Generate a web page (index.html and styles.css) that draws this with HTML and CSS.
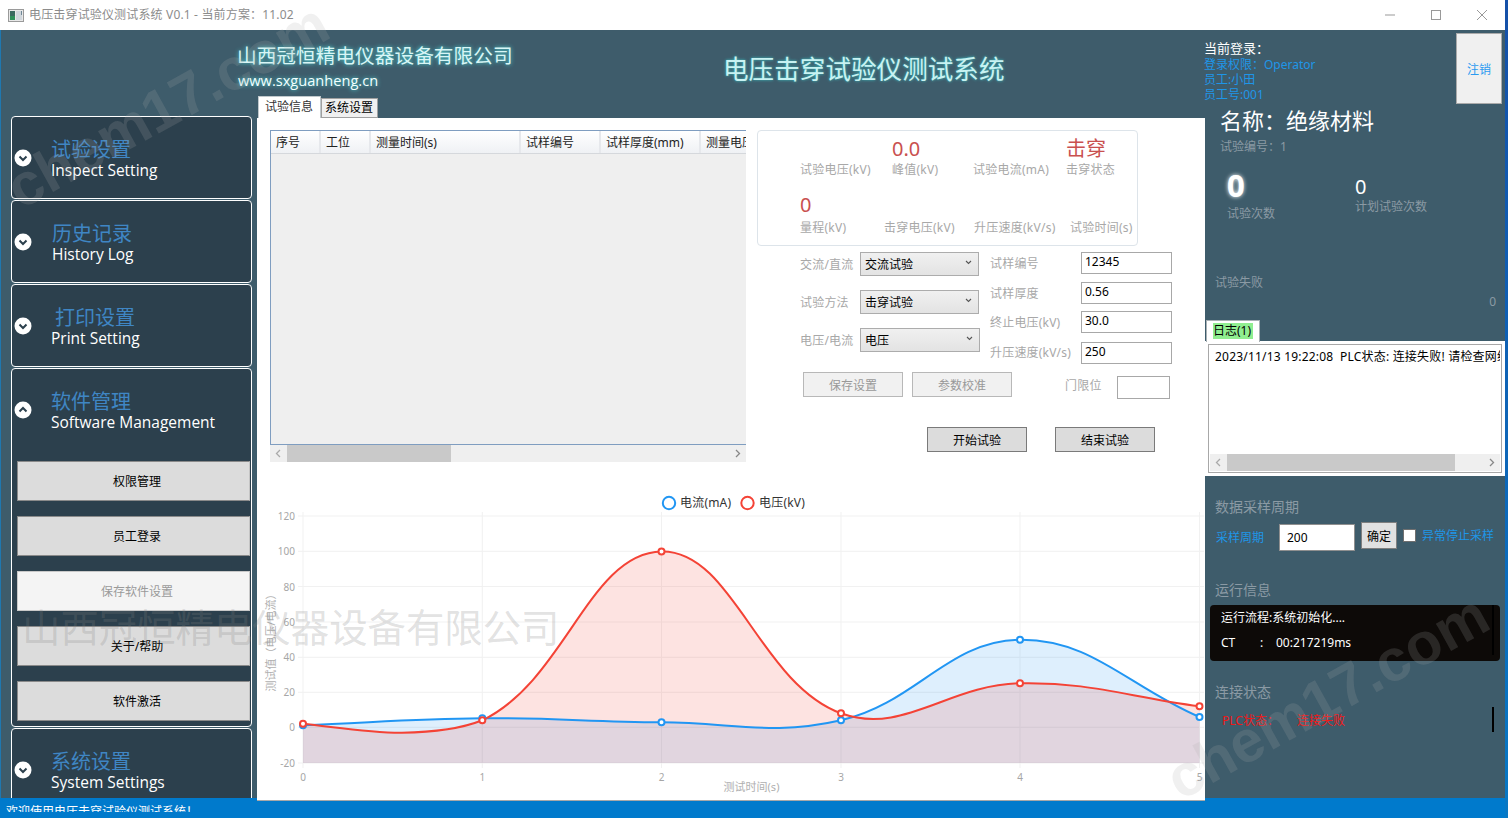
FILE: index.html
```html
<!DOCTYPE html>
<html lang="zh-CN">
<head>
<meta charset="utf-8">
<title>电压击穿试验仪测试系统</title>
<link rel="stylesheet" href="styles.css">
</head>
<body>
<div class="window">
  <header class="titlebar">
    <svg class="app-icon" width="16" height="13" viewBox="0 0 16 13"><rect x="0.5" y="0.5" width="15" height="12" fill="#e8e8e8" stroke="#9a9a9a"/><rect x="2" y="2" width="5" height="9" fill="#3a6a60"/><rect x="2" y="7" width="5" height="4" fill="#2f8f5a"/><rect x="8" y="2" width="6" height="9" fill="#cfd6dc"/><rect x="13" y="2" width="1" height="4" fill="#6f8796"/></svg>
    <span class="app-title">电压击穿试验仪测试系统 V0.1 - 当前方案：11.02</span>
    <div class="win-controls">
      <svg width="12" height="12" viewBox="0 0 12 12"><path d="M1 6H11" stroke="#999" fill="none"/></svg>
      <svg width="12" height="12" viewBox="0 0 12 12"><rect x="1.5" y="1.5" width="9" height="9" stroke="#999" fill="none"/></svg>
      <svg width="12" height="12" viewBox="0 0 12 12"><path d="M1 1L11 11M11 1L1 11" stroke="#999" fill="none"/></svg>
    </div>
  </header>

  <div class="main">
    <aside class="sidebar">
      <section class="card">
        <div class="card-head">
          <svg class="chev" width="18" height="18" viewBox="0 0 18 18"><circle cx="9" cy="9" r="8.5" fill="#fff"/><path d="M5.5 7.5L9 11L12.5 7.5" fill="none" stroke="#2c404d" stroke-width="2"/></svg>
          <div class="card-text"><div class="card-cn">试验设置</div><div class="card-en">Inspect Setting</div></div>
        </div>
      </section>
      <section class="card">
        <div class="card-head">
          <svg class="chev" width="18" height="18" viewBox="0 0 18 18"><circle cx="9" cy="9" r="8.5" fill="#fff"/><path d="M5.5 7.5L9 11L12.5 7.5" fill="none" stroke="#2c404d" stroke-width="2"/></svg>
          <div class="card-text shift-1"><div class="card-cn">历史记录</div><div class="card-en">History Log</div></div>
        </div>
      </section>
      <section class="card">
        <div class="card-head">
          <svg class="chev" width="18" height="18" viewBox="0 0 18 18"><circle cx="9" cy="9" r="8.5" fill="#fff"/><path d="M5.5 7.5L9 11L12.5 7.5" fill="none" stroke="#2c404d" stroke-width="2"/></svg>
          <div class="card-text"><div class="card-cn shift-4">打印设置</div><div class="card-en">Print Setting</div></div>
        </div>
      </section>
      <section class="card card-open">
        <div class="card-head">
          <svg class="chev" width="18" height="18" viewBox="0 0 18 18"><circle cx="9" cy="9" r="8.5" fill="#fff"/><path d="M5.5 10.5L9 7L12.5 10.5" fill="none" stroke="#2c404d" stroke-width="2"/></svg>
          <div class="card-text"><div class="card-cn">软件管理</div><div class="card-en">Software Management</div></div>
        </div>
        <div class="menu">
          <div class="menu-btn">权限管理</div>
          <div class="menu-btn">员工登录</div>
          <div class="menu-btn is-disabled">保存软件设置</div>
          <div class="menu-btn">关于/帮助</div>
          <div class="menu-btn">软件激活</div>
        </div>
      </section>
      <section class="card">
        <div class="card-head">
          <svg class="chev" width="18" height="18" viewBox="0 0 18 18"><circle cx="9" cy="9" r="8.5" fill="#fff"/><path d="M5.5 7.5L9 11L12.5 7.5" fill="none" stroke="#2c404d" stroke-width="2"/></svg>
          <div class="card-text"><div class="card-cn">系统设置</div><div class="card-en">System Settings</div></div>
        </div>
      </section>
    </aside>

    <div class="center">
      <div class="brand">
        <div class="company">
          <div class="company-name">山西冠恒精电仪器设备有限公司</div>
          <div class="company-url">www.sxguanheng.cn</div>
        </div>
        <h1 class="sys-title">电压击穿试验仪测试系统</h1>
      </div>
      <div class="tabs">
        <div class="tab tab-active">试验信息</div>
        <div class="tab">系统设置</div>
      </div>
      <div class="panel">
        <div class="panel-top">
          <div class="table-col">
            <div class="table">
              <div class="thead">
                <div class="th th-a">序号</div>
                <div class="th th-b">工位</div>
                <div class="th th-c">测量时间(s)</div>
                <div class="th th-d">试样编号</div>
                <div class="th th-e">试样厚度(mm)</div>
                <div class="th th-f">测量电压(kV)</div>
              </div>
            </div>
            <div class="hscroll">
              <svg width="17" height="17" viewBox="0 0 17 17"><path d="M10 5L6.5 8.5L10 12" fill="none" stroke="#aaa" stroke-width="1.3"/></svg>
              <div class="hthumb table-thumb"></div>
              <svg class="hscroll-end" width="17" height="17" viewBox="0 0 17 17"><path d="M7 5L10.5 8.5L7 12" fill="none" stroke="#888" stroke-width="1.3"/></svg>
            </div>
          </div>

          <div class="side-col">
            <div class="stats">
              <div class="stat-row">
                <div class="stat s92"><div class="stat-val"></div><div class="stat-lab">试验电压(kV)</div></div>
                <div class="stat s81"><div class="stat-val">0.0</div><div class="stat-lab">峰值(kV)</div></div>
                <div class="stat s93"><div class="stat-val"></div><div class="stat-lab">试验电流(mA)</div></div>
                <div class="stat"><div class="stat-val">击穿</div><div class="stat-lab">击穿状态</div></div>
              </div>
              <div class="stat-row row-two">
                <div class="stat s84"><div class="stat-val">0</div><div class="stat-lab">量程(kV)</div></div>
                <div class="stat s90"><div class="stat-val"></div><div class="stat-lab">击穿电压(kV)</div></div>
                <div class="stat s96"><div class="stat-val"></div><div class="stat-lab">升压速度(kV/s)</div></div>
                <div class="stat"><div class="stat-val"></div><div class="stat-lab">试验时间(s)</div></div>
              </div>
            </div>

            <div class="form">
              <div class="form-left">
                <div class="fld"><span class="fld-lab fl60">交流/直流</span><div class="sel"><span class="sel-text">交流试验</span><svg width="7" height="5" viewBox="0 0 7 5"><path d="M1 1L3.5 3.5L6 1" fill="none" stroke="#555" stroke-width="1.1"/></svg></div></div>
                <div class="fld"><span class="fld-lab fl60">试验方法</span><div class="sel"><span class="sel-text">击穿试验</span><svg width="7" height="5" viewBox="0 0 7 5"><path d="M1 1L3.5 3.5L6 1" fill="none" stroke="#555" stroke-width="1.1"/></svg></div></div>
                <div class="fld"><span class="fld-lab fl60">电压/电流</span><div class="sel sel-wide"><span class="sel-text">电压</span><svg width="7" height="5" viewBox="0 0 7 5"><path d="M1 1L3.5 3.5L6 1" fill="none" stroke="#555" stroke-width="1.1"/></svg></div></div>
              </div>
              <div class="form-right">
                <div class="fld-r"><span class="fld-lab fl91">试样编号</span><input class="txt" value="12345"></div>
                <div class="fld-r"><span class="fld-lab fl91">试样厚度</span><input class="txt" value="0.56"></div>
                <div class="fld-r"><span class="fld-lab fl91">终止电压(kV)</span><input class="txt" value="30.0"></div>
                <div class="fld-r"><span class="fld-lab fl91">升压速度(kV/s)</span><input class="txt" value="250"></div>
              </div>
            </div>

            <div class="actions">
              <div class="btn btn-light">保存设置</div>
              <div class="btn btn-light">参数校准</div>
              <span class="fld-lab limit-lab">门限位</span>
              <input class="txt limit-input" value="">
            </div>
            <div class="actions-run">
              <div class="btn btn-dark">开始试验</div>
              <div class="btn btn-dark">结束试验</div>
            </div>
          </div>
        </div>

        <svg class="chart" width="948" height="311" viewBox="257 490 948 311">
          <g class="grid">
            <line x1="298" x2="1204" y1="516" y2="516"/><line x1="298" x2="1204" y1="551.3" y2="551.3"/>
            <line x1="298" x2="1204" y1="586.5" y2="586.5"/><line x1="298" x2="1204" y1="622" y2="622"/>
            <line x1="298" x2="1204" y1="657.3" y2="657.3"/><line x1="298" x2="1204" y1="692.3" y2="692.3"/>
            <line x1="298" x2="1204" y1="727.3" y2="727.3"/><line x1="298" x2="1204" y1="763" y2="763"/>
            <line x1="303" x2="303" y1="512" y2="768"/><line x1="482.3" x2="482.3" y1="512" y2="768"/>
            <line x1="661.5" x2="661.5" y1="512" y2="768"/><line x1="841" x2="841" y1="512" y2="768"/>
            <line x1="1020" x2="1020" y1="512" y2="768"/><line x1="1199.5" x2="1199.5" y1="512" y2="768"/>
          </g>
          <path class="fill-blue" d="M303,725.3 C374.7,722.5 410.6,718.9 482.3,718.3 C554,717.7 589.8,721.9 661.5,722.3 C733.2,722.7 772.5,736.1 841,720.3 C915.9,703 948.3,640.4 1020,639.7 C1091.7,639 1127.7,686.1 1199.5,717 L1199.5,763 L303,763 Z"/>
          <path class="fill-red" d="M303,723.7 C335,727 370,733 402,732.7 C430,732.4 458,730 482.3,720.3 C565.3,680.5 589.1,552.9 661.5,551.5 C732.6,550.1 759.1,683.2 841,713.3 C902.5,735.9 948.3,684.7 1020,683.3 C1091.7,681.9 1127.7,697.1 1199.5,706.3 L1199.5,763 L303,763 Z"/>
          <path class="line-blue" d="M303,725.3 C374.7,722.5 410.6,718.9 482.3,718.3 C554,717.7 589.8,721.9 661.5,722.3 C733.2,722.7 772.5,736.1 841,720.3 C915.9,703 948.3,640.4 1020,639.7 C1091.7,639 1127.7,686.1 1199.5,717"/>
          <path class="line-red" d="M303,723.7 C335,727 370,733 402,732.7 C430,732.4 458,730 482.3,720.3 C565.3,680.5 589.1,552.9 661.5,551.5 C732.6,550.1 759.1,683.2 841,713.3 C902.5,735.9 948.3,684.7 1020,683.3 C1091.7,681.9 1127.7,697.1 1199.5,706.3"/>
          <g class="pt-blue">
            <circle cx="303" cy="725.3" r="3"/><circle cx="482.3" cy="718.3" r="3"/><circle cx="661.5" cy="722.3" r="3"/>
            <circle cx="841" cy="720.3" r="3"/><circle cx="1020" cy="639.7" r="3"/><circle cx="1199.5" cy="717" r="3"/>
          </g>
          <g class="pt-red">
            <circle cx="303" cy="723.7" r="3"/><circle cx="482.3" cy="720.3" r="3"/><circle cx="661.5" cy="551.5" r="3"/>
            <circle cx="841" cy="713.3" r="3"/><circle cx="1020" cy="683.3" r="3"/><circle cx="1199.5" cy="706.3" r="3"/>
          </g>
          <g class="ticks-y">
            <text x="295" y="520">120</text><text x="295" y="555">100</text><text x="295" y="591">80</text>
            <text x="295" y="626">60</text><text x="295" y="661">40</text><text x="295" y="696">20</text>
            <text x="295" y="731">0</text><text x="295" y="767">-20</text>
          </g>
          <g class="ticks-x">
            <text x="303" y="781">0</text><text x="482.3" y="781">1</text><text x="661.5" y="781">2</text>
            <text x="841" y="781">3</text><text x="1020" y="781">4</text><text x="1199.5" y="781">5</text>
          </g>
          <text class="axis-title" x="751.5" y="791">测试时间(s)</text>
          <text class="axis-title" transform="translate(275 640) rotate(-90)">测试值（电压/电流）</text>
          <circle class="leg-blue" cx="669" cy="503" r="6.2"/>
          <text class="leg-text" x="680" y="507">电流(mA)</text>
          <circle class="leg-red" cx="747.5" cy="503" r="6.2"/>
          <text class="leg-text" x="759" y="507">电压(kV)</text>
        </svg>
      </div>
    </div>

    <aside class="right">
      <div class="login">
        <div class="login-info">
          <div class="login-who">当前登录：</div>
          <div class="blue-line">登录权限：Operator</div>
          <div class="blue-line">员工:小田</div>
          <div class="blue-line">员工号:001</div>
        </div>
        <div class="logout">注销</div>
      </div>
      <div class="mat-name">名称：绝缘材料</div>
      <div class="gray-line mat-no">试验编号：1</div>
      <div class="counters">
        <div class="counter"><div class="count-big">0</div><div class="gray-line count-lab">试验次数</div></div>
        <div class="counter counter-b"><div class="count-small">0</div><div class="gray-line">计划试验次数</div></div>
      </div>
      <div class="gray-line fail-lab">试验失败</div>
      <div class="gray-line fail-val">0</div>
      <div class="log-tabs"><div class="log-tab"><span>日志(1)</span></div></div>
      <div class="log">
        <div class="log-inner">
          <div class="log-text">2023/11/13 19:22:08&nbsp; PLC状态: 连接失败! 请检查网络连接是否正常</div>
          <div class="hscroll log-scroll">
            <svg width="17" height="17" viewBox="0 0 17 17"><path d="M10 5L6.5 8.5L10 12" fill="none" stroke="#aaa" stroke-width="1.3"/></svg>
            <div class="hthumb log-thumb"></div>
            <svg class="hscroll-end" width="17" height="17" viewBox="0 0 17 17"><path d="M7 5L10.5 8.5L7 12" fill="none" stroke="#888" stroke-width="1.3"/></svg>
          </div>
        </div>
      </div>
      <div class="sec-title sec-sample">数据采样周期</div>
      <div class="sample">
        <span class="blue-line sample-lab">采样周期</span>
        <input class="sample-input" value="200">
        <div class="sample-ok">确定</div>
        <span class="check"></span>
        <span class="blue-line check-lab">异常停止采样</span>
      </div>
      <div class="sec-title sec-run">运行信息</div>
      <div class="run-box">
        <div class="run-line">运行流程:系统初始化....</div>
        <div class="run-line run-ct"><span class="ct-a">CT</span><span class="ct-b">:</span><span>00:217219ms</span></div>
        <i class="run-bar"></i>
      </div>
      <div class="sec-title sec-conn">连接状态</div>
      <div class="conn">
        <span class="conn-a">PLC状态：</span><span class="conn-b">连接失败</span>
        <i class="conn-bar"></i>
      </div>
    </aside>
  </div>

  <footer class="status"><div class="status-text">欢迎使用电压击穿试验仪测试系统！</div></footer>

  <div class="wm wm-top">chem17.com</div>
  <div class="wm wm-bottom">chem17.com</div>
  <div class="wm-company">山西冠恒精电仪器设备有限公司</div>
</div>
</body>
</html>
```

FILE: styles.css
```css
* { box-sizing: border-box; }
html, body { margin: 0; padding: 0; height: 100%; overflow: hidden; }
body {
  font-family: "Noto Sans", "Noto Sans CJK SC", sans-serif;
  font-size: 12px;
  background: linear-gradient(#1550a8, #0878c4);
}
h1 { margin: 0; font-weight: 400; }

.window {
  position: relative;
  width: 1505px;
  height: 818px;
  display: flex;
  flex-direction: column;
  overflow: hidden;
  background: #1f78b0;
  padding-left: 1px;
}
.titlebar {
  height: 30px;
  background: #fff;
  display: flex;
  align-items: center;
  padding-left: 8px;
  flex: none;
  margin-left: -1px;
}
.app-icon { flex: none; margin-right: 5px; }
.app-title { color: #8c8c8c; line-height: 30px; letter-spacing: .16px; }
.win-controls { margin-left: auto; display: flex; gap: 34px; padding-right: 17px; }
.win-controls svg { display: block; }

.main {
  flex: 1;
  min-height: 0;
  display: flex;
  background: #3e5c6b;
}

/* sidebar */
.sidebar {
  width: 256px;
  flex: none;
  padding: 86px 5px 0 10px;
  overflow: hidden;
}
.card {
  height: 83px;
  margin-bottom: 1px;
  background: #2c404d;
  border: 1px solid #fff;
  border-radius: 4px;
}
.card-open { height: 359px; }
.card-head { height: 82px; display: flex; align-items: center; padding-left: 2px; }
.chev { display: block; flex: none; }
.card-text { margin-left: 19px; }
.shift-1 { margin-left: 20px; }
.shift-4 { margin-left: 4px; }
.card-cn { color: #3f86c4; font-size: 20px; line-height: 26px; }
.card-en { color: #fff; font-size: 15.5px; line-height: 18px; margin-top: -2px; font-family: "Open Sans", "Noto Sans", sans-serif; }
.menu { padding: 10px 0 0 5px; display: flex; flex-direction: column; gap: 15px; }
.menu-btn {
  width: 233px;
  height: 40px;
  background: #dcdcdc;
  border: 1px solid #8a8a8a;
  border-right-color: #c4c4c4;
  color: #000;
  display: flex;
  align-items: center;
  justify-content: center;
  padding-left: 7px;
}
.menu-btn.is-disabled { background: #f4f4f4; color: #9a9a9a; border-color: #c8c8c8; }

/* centre */
.center { width: 948px; flex: none; display: flex; flex-direction: column; position: relative; z-index: 1; height: 771px; }
.brand { height: 66px; display: flex; flex: none; }
.company { width: 290px; margin-left: -20px; padding-top: 15px; flex: none; }
.company-name { color: #d8f6f6; font-size: 19.7px; line-height: 22px; text-shadow: 0 0 4px #4fe3e3; white-space: nowrap; }
.company-url { color: #f2ffff; font-size: 14.6px; line-height: 20px; margin-top: 3px; text-shadow: 0 0 4px #4fe3e3; font-family: "Open Sans", "Noto Sans", sans-serif; margin-left: 1px; }
.sys-title { margin: 25px 0 0 196px; color: #c8f2f2; font-size: 25.6px; line-height: 30px; white-space: nowrap; text-shadow: 0 0 3px #39c9c9; }

.tabs { height: 22px; display: flex; align-items: flex-end; padding-left: 1px; flex: none; }
.tab {
  height: 20px;
  width: 57px;
  background: #f0f0f0;
  border: 1px solid #a0a0a0;
  color: #000;
  line-height: 18px;
  padding-left: 3px;
  margin-bottom: 0;
}
.tab-active { height: 22px; width: 63px; background: #fff; border-color: #c0c8cc; border-bottom: 0; padding-left: 6px; color: #333; line-height: 20px; }

.panel {
  flex: 1;
  background: #fff;
  border-bottom: 1px solid #a8a8a8;
  display: flex;
  flex-direction: column;
  min-height: 0;
}
.panel-top { height: 372px; flex: none; display: flex; padding: 12px 0 0 13px; }
.table-col { width: 476px; flex: none; }
.table { height: 315px; background: #efefef; border: 1px solid #7f9dc0; border-right: 0; overflow: hidden; }
.thead { display: flex; height: 23px; width: 600px; border-bottom: 1px solid #d5d8dc; background: linear-gradient(#fff, #eff1f4); }
.th { border-right: 2px solid #e6e8ec; padding-left: 5px; line-height: 23px; color: #222; white-space: nowrap; }
.th-a { width: 50px; } .th-b { width: 50px; } .th-c { width: 150px; } .th-d { width: 80px; } .th-e { width: 100px; } .th-f { width: 100px; }
.hscroll { display: flex; height: 17px; background: #efefef; width: 476px; }
.hscroll svg { display: block; flex: none; }
.hthumb { height: 17px; background: #c9c9c9; }
.hscroll-end { margin-left: auto; }
.table-thumb { width: 164px; }

.side-col { width: 450px; padding-left: 11px; flex: none; }
.stats { width: 381px; height: 116px; border: 1px solid #dde4ea; border-radius: 4px; padding-left: 42px; }
.stat-row { display: flex; height: 49px; padding-top: 6px; }
.row-two { padding-top: 8px; height: 58px; margin-top: 5px; }
.row-two .stat-lab { margin-top: 3px; }
.stat { flex: none; }
.s92 { width: 92px; } .s81 { width: 81px; } .s93 { width: 93px; } .s84 { width: 84px; } .s90 { width: 90px; } .s96 { width: 96px; }
.stat-val { height: 24px; line-height: 24px; font-size: 20px; color: #c9504f; }
.stat-lab { color: #a8a8a8; line-height: 16px; margin-top: 1px; white-space: nowrap; letter-spacing: .25px; }

.form { display: flex; padding: 6px 0 0 43px; height: 126px; }
.form-left { width: 190px; flex: none; display: flex; flex-direction: column; gap: 14px; }
.fld { display: flex; align-items: center; height: 24px; }
.fld-lab { color: #a8a8a8; white-space: nowrap; letter-spacing: .2px; }
.fl60 { width: 60px; flex: none; }
.fl91 { width: 91px; flex: none; }
.sel {
  width: 119px;
  height: 24px;
  border: 1px solid #acacac;
  background: linear-gradient(#f0f0f0, #e3e3e3);
  color: #000;
  padding-left: 4px;
  display: flex;
  align-items: center;
  justify-content: space-between;
  padding-right: 6px;
}
.sel-text { line-height: 22px; padding-top: 1px; }
.sel svg { margin-top: -3px; display: block; }
.sel-wide { width: 120px; }
.form-right { display: flex; flex-direction: column; gap: 8px; }
.fld-r { display: flex; align-items: center; height: 22px; }
.fld-r:nth-child(3) { margin-top: -1px; }
.fld-r:nth-child(4) { margin-top: 1px; }
.fld-r:nth-child(4) .fld-lab { margin-bottom: 2px; }
.txt {
  width: 91px;
  height: 22px;
  border: 1px solid #a8a8a8;
  background: #fff;
  font: inherit;
  color: #000;
  padding: 0 3px 4px;
  margin: 0;
  outline: 0;
}

.actions { display: flex; align-items: center; padding-left: 46px; height: 25px; margin-top: 0; }
.btn { width: 100px; height: 25px; display: flex; align-items: center; justify-content: center; flex: none; }
.btn-light { background: #f1f1f1; border: 1px solid #b8b8b8; color: #999; }
.btn-light + .btn-light { margin-left: 9px; }
.limit-lab { margin-left: 53px; width: 52px; flex: none; }
.limit-input { width: 53px; height: 23px; margin-top: 5px; }
.actions-run { display: flex; padding-left: 170px; margin-top: 30px; gap: 28px; }
.btn-dark { background: #dcdcdc; border: 1px solid #7a7a7a; color: #000; }

.chart { display: block; flex: none; overflow: hidden; }
.chart text { font-family: "Noto Sans", "Noto Sans CJK SC", sans-serif; }
.grid line { stroke: #f1f1f1; stroke-width: 1; }
.fill-blue { fill: rgba(33, 150, 243, .15); }
.fill-red { fill: rgba(244, 67, 54, .15); }
.line-blue { fill: none; stroke: #2196f3; stroke-width: 2; }
.line-red { fill: none; stroke: #f44336; stroke-width: 2; }
.pt-blue circle { fill: #fff; stroke: #2196f3; stroke-width: 2; }
.pt-red circle { fill: #fff; stroke: #f44336; stroke-width: 2; }
.ticks-y text { font-size: 10px; fill: #a6a6a6; text-anchor: end; }
.ticks-x text { font-size: 10px; fill: #a6a6a6; text-anchor: middle; }
.axis-title { font-size: 11px; fill: #b0b0b0; text-anchor: middle; }
.leg-blue { fill: #fff; stroke: #2196f3; stroke-width: 2; }
.leg-red { fill: #fff; stroke: #f44336; stroke-width: 2; }
.leg-text { font-size: 12px; fill: #333; letter-spacing: .2px; }

/* right column */
.right { width: 300px; flex: none; display: flex; flex-direction: column; color: #8b9aa4; }
.login { display: flex; justify-content: space-between; height: 75px; flex: none; padding: 3px 3px 0 0; }
.login-info { margin: 7px 0 0 -1px; }
.login-who { color: #fff; font-size: 13px; line-height: 17px; }
.blue-line { color: #1e96e8; line-height: 15px; }
.logout { width: 46px; height: 71px; background: #f0f0f0; border: 1px solid #aaa; color: #2a9bf0; display: flex; align-items: center; justify-content: center; }
.mat-name { color: #fff; font-size: 22px; line-height: 28px; margin: 1px 0 0 15px; }
.gray-line { color: #8b9aa4; line-height: 16px; }
.mat-no { margin: 5px 0 0 15px; }
.counters { display: flex; margin: 16px 0 0 22px; height: 52px; }
.counter { width: 128px; }
.counter-b { padding-top: 4px; }
.count-big { color: #fff; font-size: 31px; font-weight: 700; line-height: 30px; text-shadow: 0 0 4px #fff; margin-top: -1px; }
.count-lab { margin-top: 6px; }
.count-small { color: #fff; font-size: 20px; line-height: 24px; }
.fail-lab { margin: 52px 0 0 10px; }
.fail-val { margin-top: 3px; text-align: right; padding-right: 9px; }
.log-tabs { height: 22px; margin-top: 10px; padding-left: 1px; flex: none; position: relative; z-index: 1; }
.log-tab { width: 54px; height: 22px; background: #fff; border: 1px solid #a8b0b4; border-bottom: 0; padding: 2px 0 0 6px; color: #000; line-height: 16px; }
.log-tab span { background: #90ee90; display: block; width: 40px; }
.log { height: 135px; margin-top: -1px; background: #fff; padding: 3px; flex: none; }
.log-inner { border: 1px solid #a8a8a8; height: 129px; position: relative; display: flex; flex-direction: column; padding: 1px; overflow: hidden; }
.log-text { color: #000; line-height: 18px; padding: 2px 0 0 5px; white-space: nowrap; overflow: hidden; flex: 1; letter-spacing: .2px; }
.log-scroll { width: auto; }
.log-thumb { width: 228px; }
.sec-title { color: #8b9aa4; font-size: 14px; line-height: 20px; margin-left: 10px; }
.sec-sample { margin-top: 21px; }
.sample { display: flex; align-items: flex-start; height: 29px; margin-top: 5px; padding-left: 11px; }
.sample-lab { line-height: 27px; margin-top: 2px; width: 63px; flex: none; white-space: nowrap; }
.sample-input { width: 76px; height: 27px; margin: 2px 0 0 0; border: 1px solid #8f8f8f; font: inherit; padding: 0 7px; color: #000; background: #fff; outline: 0; }
.sample-ok { width: 36px; height: 27px; margin-left: 6px; background: #e1e1e1; border: 1px solid #7f7f7f; color: #000; display: flex; align-items: center; justify-content: center; }
.check { width: 13px; height: 13px; background: #fff; margin: 7px 0 0 6px; border: 1px solid #707070; }
.check-lab { line-height: 15px; margin: 6px 0 0 6px; white-space: nowrap; }
.sec-run { margin-top: 29px; }
.run-box { width: 290px; height: 56px; margin: 5px 0 0 5px; background: #0d0a08; border-radius: 4px; position: relative; padding: 3px 0 0 11px; color: #fff; font-size: 12px; }
.run-line { line-height: 20px; }
.run-ct { margin-top: 5px; display: flex; }
.ct-a { width: 39px; } .ct-b { width: 16px; }
.run-bar { position: absolute; left: 282px; top: 0; width: 2px; height: 50px; background: #000; }
.sec-conn { margin-top: 21px; }
.conn { display: flex; align-items: center; height: 25px; margin: 5px 0 0 17px; color: #f01818; }
.conn-a { width: 75px; }
.conn-bar { width: 2px; height: 25px; background: #000; margin-left: 147px; }

.status { height: 20px; flex: none; background: #007acc; margin-left: -1px; padding: 7px 0 0 6px; }
.status-text { height: 7px; overflow: hidden; color: #fff; line-height: 13px; }

/* watermarks */
.wm {
  position: absolute;
  font-family: "Liberation Sans", sans-serif;
  font-weight: 700;
  font-size: 59px;
  line-height: 70px;
  color: rgba(170, 170, 170, .18);
  white-space: nowrap;
  transform: rotate(-29deg);
  transform-origin: 0 100%;
  pointer-events: none;
  z-index: 5;
}
.wm-top { left: 28px; top: 153px; }
.wm-bottom { left: 1188px; top: 744px; }
.wm-company {
  position: absolute;
  left: 22px;
  top: 598px;
  font-family: "Noto Sans CJK SC", sans-serif;
  font-size: 38.4px;
  line-height: 54px;
  color: rgba(130, 130, 130, .24);
  white-space: nowrap;
  font-weight: 400;
  pointer-events: none;
  z-index: 5;
}
```
